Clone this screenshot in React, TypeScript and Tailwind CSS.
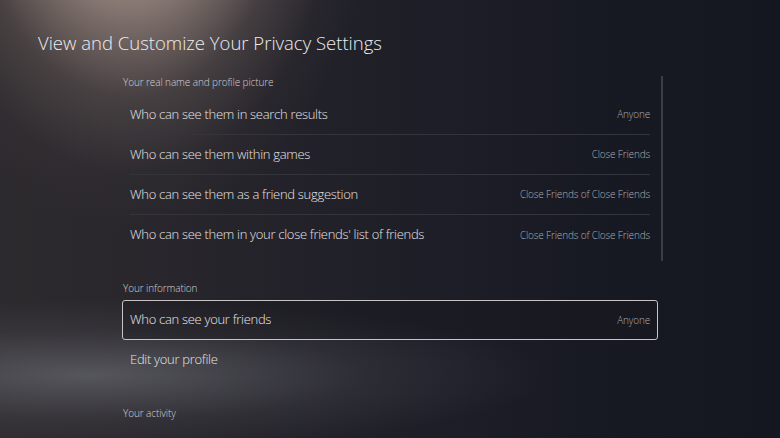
import React from "react";

const rows = [
  { label: "Who can see them in search results", value: "Anyone" },
  { label: "Who can see them within games", value: "Close Friends" },
  { label: "Who can see them as a friend suggestion", value: "Close Friends of Close Friends" },
  { label: "Who can see them in your close friends' list of friends", value: "Close Friends of Close Friends" },
];

export default function App() {
  return (
    <div
      className="relative w-[780px] h-[438px] overflow-hidden bg-[#171922] text-[#e4e4e6] bg-[radial-gradient(ellipse_250px_380px_at_130px_-150px,rgba(235,210,195,0.95)_0%,rgba(200,176,162,0.6)_40%,rgba(140,122,115,0.3)_65%,rgba(90,80,80,0.1)_85%,transparent_100%),radial-gradient(ellipse_460px_75px_at_90px_375px,rgba(115,116,124,0.6),rgba(90,90,98,0.22)_60%,transparent_100%),linear-gradient(90deg,#2d2a2e_0%,#28262c_22%,#1f1f28_50%,#181a23_75%,#151720_100%)]"
      style={{ fontFamily: '"Open Sans", "Noto Sans", sans-serif' }}
    >
      <div className="pl-[38px] pt-[31px] h-[74px]">
        <div className="text-[18.5px] leading-[24px] font-light text-[#ececee]">
          View and Customize Your Privacy Settings
        </div>
      </div>

      <div className="ml-[122px] flex">
        <div className="w-[536px]">
          <div className="h-[16px] leading-[16px] text-[10px] font-light tracking-[-0.1px] text-[#d2d0d3] pl-[1px]">
            Your real name and profile picture
          </div>
          <div className="mt-[5px]">
            {rows.map((r, i) => (
              <div key={i} className="mx-2">
                <div
                  className={
                    "h-[40px] flex items-center justify-between " +
                    (i < rows.length - 1 ? "border-b border-[#34343c]" : "")
                  }
                >
                  <span className="text-[13px] font-light tracking-[-0.3px] text-[#e4e4e6]">{r.label}</span>
                  <span className="text-[10px] font-light tracking-[-0.15px] text-[#adadb4]">{r.value}</span>
                </div>
              </div>
            ))}
          </div>
          <div className="h-[6px]" />
        </div>
        <div className="ml-[3px] mt-[2px] w-[2px] bg-[#3b3e4a]" />
      </div>

      <div className="ml-[122px] w-[536px]">
        <div className="mt-[19px] h-[16px] leading-[16px] text-[10px] font-light tracking-[-0.1px] text-[#d2d0d3] pl-[1px]">
          Your information
        </div>
        <div className="mt-[4px] h-[40px] flex items-center justify-between px-[7px] border-[1.5px] border-[#c8c3c4] rounded-[3px] bg-[rgba(22,22,28,0.35)]">
          <span className="text-[13px] font-light tracking-[-0.3px] text-[#e8e8ea]">Who can see your friends</span>
          <span className="text-[10px] font-light tracking-[-0.15px] text-[#adadb4]">Anyone</span>
        </div>
        <div className="h-[40px] flex items-center px-2">
          <span className="text-[13px] font-light tracking-[-0.3px] text-[#e4e4e6]">Edit your profile</span>
        </div>
        <div className="mt-[25px] h-[16px] leading-[16px] text-[10px] font-light tracking-[-0.1px] text-[#d2d0d3] pl-[1px]">
          Your activity
        </div>
      </div>
    </div>
  );
}
